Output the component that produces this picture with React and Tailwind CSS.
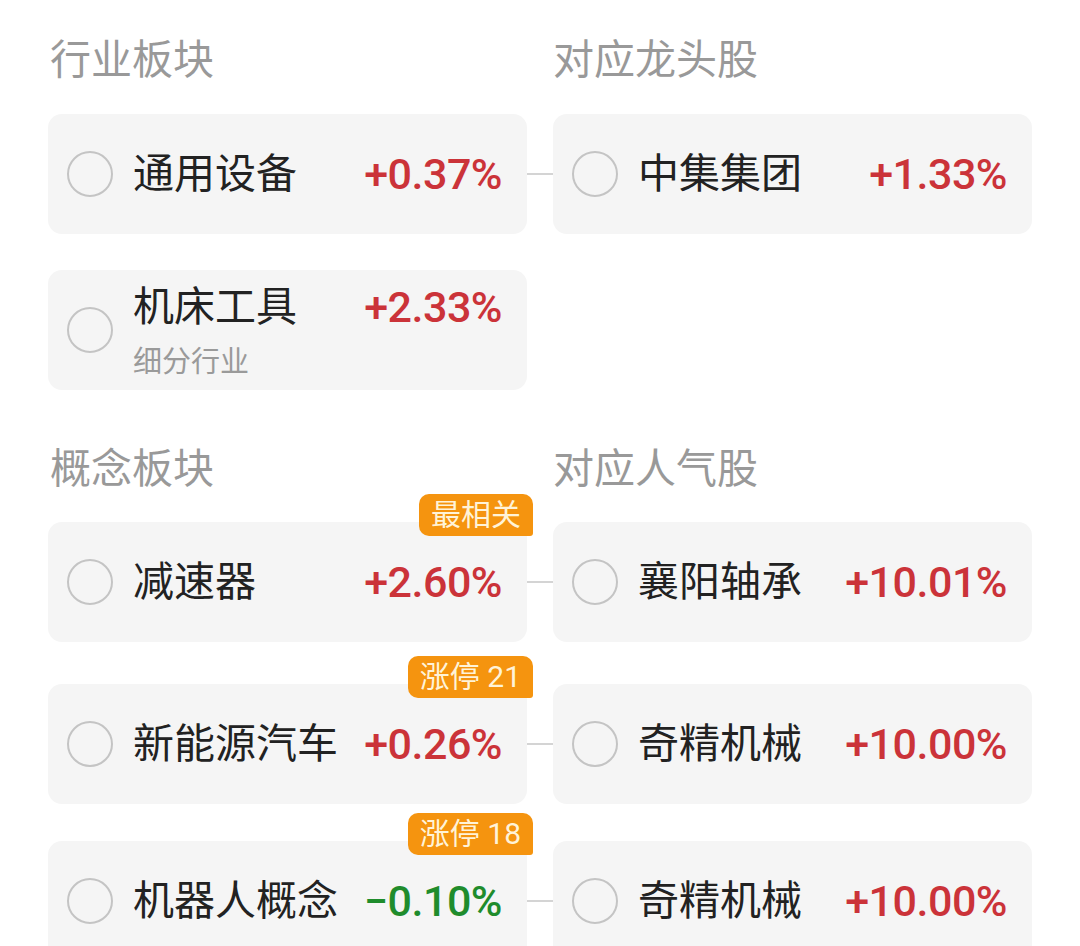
import React from 'react';

const FONT = { fontFamily: 'Roboto, "Noto Sans CJK SC", sans-serif' };

function Pct({ value }) {
    const down = value.startsWith('−');
    return (
        <span className={`text-[43px] leading-[44px] font-medium tracking-[-0.5px] ${down ? 'text-[#1f8c2c]' : 'text-[#cb3339]'}`}>
            {value}
        </span>
    );
}

function Card({ name, pct, sub, badge }) {
    return (
        <div className='relative h-[120px] w-[479px] bg-[#f5f5f5] rounded-[14px] flex items-center'>
            {badge && (
                <div className='absolute -top-[28px] -right-[6px] h-[42px] px-[12px] flex items-center bg-[#f5940f] text-[#fff3d8] text-[30px] leading-none rounded-t-[10px] rounded-bl-[10px] rounded-br-[3px]'>
                    {badge}
                </div>
            )}
            <div className='ml-[19px] mr-[20px] w-[46px] h-[46px] rounded-full border-[2.5px] border-[#c4c4c4] shrink-0' />
            <div className={`flex-1 flex flex-col pr-[25px] ${sub ? 'pt-[4px]' : ''}`}>
                <div className='flex items-center justify-between'>
                    <span className='text-[41px] leading-[44px] text-[#222]'>{name}</span>
                    <Pct value={pct} />
                </div>
                {sub && <span className='mt-[15px] text-[29px] leading-[36px] text-[#9a9a9a]'>{sub}</span>}
            </div>
        </div>
    );
}

function Row({ left, right, className }) {
    return (
        <div className={`flex items-center ${className || ''}`}>
            <Card {...left} />
            {right ? (
                <>
                    <div className='w-[26px] h-[2px] bg-[#d4d4d4]' />
                    <Card {...right} />
                </>
            ) : null}
        </div>
    );
}

function Header({ left, right, className }) {
    return (
        <div className={`flex text-[41px] leading-[52px] text-[#999] ${className || ''}`}>
            <div className='w-[505px] pl-[2px]'>{left}</div>
            <div>{right}</div>
        </div>
    );
}

export default function App() {
    return (
        <div className='w-[1080px] h-[946px] overflow-hidden bg-white pl-[48px]' style={FONT}>
            <Header left='行业板块' right='对应龙头股' className='pt-[34px]' />
            <Row className='mt-[28px]' left={{ name: '通用设备', pct: '+0.37%' }} right={{ name: '中集集团', pct: '+1.33%' }} />
            <Row className='mt-[36px]' left={{ name: '机床工具', pct: '+2.33%', sub: '细分行业' }} />

            <Header left='概念板块' right='对应人气股' className='mt-[53px]' />
            <Row className='mt-[27px]' left={{ name: '减速器', pct: '+2.60%', badge: '最相关' }} right={{ name: '襄阳轴承', pct: '+10.01%' }} />
            <Row className='mt-[42px]' left={{ name: '新能源汽车', pct: '+0.26%', badge: '涨停 21' }} right={{ name: '奇精机械', pct: '+10.00%' }} />
            <Row className='mt-[37px]' left={{ name: '机器人概念', pct: '−0.10%', badge: '涨停 18' }} right={{ name: '奇精机械', pct: '+10.00%' }} />
        </div>
    );
}
